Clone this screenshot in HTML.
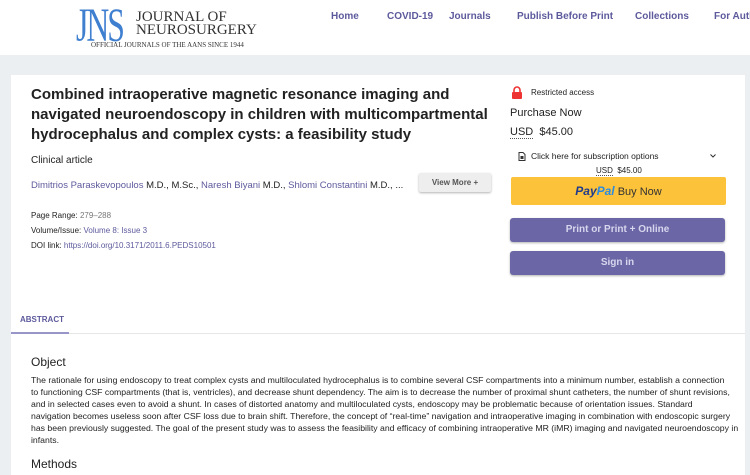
<!DOCTYPE html>
<html><head><meta charset="utf-8"><style>
*{margin:0;padding:0;box-sizing:border-box}
body{width:750px;height:474px;overflow:hidden;background:#eceff2;font-family:"Liberation Sans",sans-serif;color:#222;position:relative}
.hdr{position:absolute;left:0;top:0;width:750px;height:55px;background:#fff}
.nav a{position:absolute;top:11px;font-size:10px;font-weight:bold;color:#5d5a9c;text-decoration:none;white-space:nowrap}
.card{position:absolute;left:11px;top:75px;width:734px;height:400px;background:#fff}
.abs{position:absolute}
.btn{position:absolute;left:510px;width:215px;border-radius:3px;color:#d8d6ee;font-size:10px;font-weight:bold;text-align:center;background:#6b67a6;box-shadow:0 1px 2px rgba(0,0,0,.3)}
a{color:#5d5a9c;text-decoration:none}
.p{white-space:nowrap}
svg{display:block}
</style></head><body>
<div class="hdr">
 <div class="abs" style="left:76px;top:4px;font-family:'Liberation Serif',serif;color:#3f7fd0;font-size:48px;line-height:44px;letter-spacing:-3px;transform:scaleX(0.66);transform-origin:left">JNS</div>
 <div class="abs" style="left:136px;top:11px;font-family:'Liberation Serif',serif;color:#333;font-size:15px;line-height:13px">JOURNAL OF<br>NEUROSURGERY</div>
 <div class="abs" style="left:91px;top:41px;font-family:'Liberation Serif',serif;color:#333;font-size:7px;white-space:nowrap">OFFICIAL JOURNALS OF THE AANS SINCE 1944</div>
 <div class="nav"><a style="left:331px">Home</a><a style="left:387px">COVID-19</a><a style="left:449px">Journals</a><a style="left:517px">Publish Before Print</a><a style="left:635px">Collections</a><a style="left:714px">For Auth</a></div>
</div>
<div class="card"></div>
<div class="abs" style="left:31px;top:85px;width:470px;font-size:15px;font-weight:bold;line-height:20px;color:#222">Combined intraoperative magnetic resonance imaging and navigated neuroendoscopy in children with multicompartmental hydrocephalus and complex cysts: a feasibility study</div>
<div class="abs" style="left:31px;top:155px;font-size:10px">Clinical article</div>
<div class="abs" style="left:31px;top:180px;font-size:9.5px;white-space:nowrap"><a>Dimitrios Paraskevopoulos</a> M.D., M.Sc., <a>Naresh Biyani</a> M.D., <a>Shlomi Constantini</a> M.D., ...</div>
<div class="abs" style="left:419px;top:173px;width:72px;height:19px;background:#eee;border-radius:2px;box-shadow:0 1px 2px rgba(0,0,0,.3);font-size:8px;font-weight:bold;color:#555;text-align:center;line-height:19px">View More +</div>
<div class="abs" style="left:31px;top:208px;font-size:8px;line-height:15px">Page Range: <span style="color:#777">279–288</span><br>Volume/Issue: <a>Volume 8: Issue 3</a><br>DOI link: <a>https://doi.org/10.3171/2011.6.PEDS10501</a></div>
<div class="abs" style="left:511px;top:86px;width:12px;height:13px"><svg width="12" height="13"><path d="M3 6V4a3 3 0 0 1 6 0v2" stroke="#e33" stroke-width="1.6" fill="none"/><rect x="1" y="6" width="10" height="7" rx="1" fill="#e33"/></svg></div>
<div class="abs" style="left:531px;top:88px;font-size:8px">Restricted access</div>
<div class="abs" style="left:510px;top:107px;font-size:11px">Purchase Now</div>
<div class="abs" style="left:510px;top:126px;font-size:11px"><span style="border-bottom:1px dotted #555">USD</span>&nbsp; $45.00</div>
<div class="abs" style="left:518px;top:152px"><svg width="8" height="9"><path d="M1 .5h4l2 2v6H1z" fill="none" stroke="#333"/><rect x="2.5" y="4" width="3" height="3" fill="#333"/></svg></div>
<div class="abs" style="left:531px;top:151px;font-size:8.5px;white-space:nowrap">Click here for subscription options</div>
<div class="abs" style="left:710px;top:154px"><svg width="6" height="4"><path d="M.5.5l2.5 2.5 2.5-2.5" fill="none" stroke="#333"/></svg></div>
<div class="abs" style="left:596px;top:166px;font-size:8px"><span style="border-bottom:1px dotted #555">USD</span>&nbsp; $45.00</div>
<div class="abs" style="left:511px;top:177px;width:215px;height:28px;background:#fcc23a;border-radius:2px;text-align:center;line-height:28px;font-size:11px;color:#333"><b style="font-style:italic;color:#1f3b8c;font-size:12px">Pay<span style="color:#2a8be0">Pal</span></b> Buy Now</div>
<div class="btn" style="top:218px;height:24px;line-height:24px">Print or Print + Online</div>
<div class="btn" style="top:251px;height:24px;line-height:24px">Sign in</div>
<div class="abs" style="left:20px;top:315px;font-size:8px;font-weight:bold;color:#5d5a9c">ABSTRACT</div>
<div class="abs" style="left:11px;top:333px;width:734px;height:1px;background:#e6e6e6"></div>
<div class="abs" style="left:11px;top:332px;width:58px;height:2px;background:#9896c8"></div>
<div class="abs" style="left:31px;top:355px;font-size:12px">Object</div>
<div class="abs" style="left:31px;top:374px;font-size:8.7px;line-height:12px">
<div class="p">The rationale for using endoscopy to treat complex cysts and multiloculated hydrocephalus is to combine several CSF compartments into a minimum number, establish a connection</div>
<div class="p">to functioning CSF compartments (that is, ventricles), and decrease shunt dependency. The aim is to decrease the number of proximal shunt catheters, the number of shunt revisions,</div>
<div class="p">and in selected cases even to avoid a shunt. In cases of distorted anatomy and multiloculated cysts, endoscopy may be problematic because of orientation issues. Standard</div>
<div class="p">navigation becomes useless soon after CSF loss due to brain shift. Therefore, the concept of “real-time” navigation and intraoperative imaging in combination with endoscopic surgery</div>
<div class="p">has been previously suggested. The goal of the present study was to assess the feasibility and efficacy of combining intraoperative MR (iMR) imaging and navigated neuroendoscopy in</div>
<div class="p">infants.</div>
</div>
<div class="abs" style="left:31px;top:457px;font-size:12px">Methods</div>
</body></html>
